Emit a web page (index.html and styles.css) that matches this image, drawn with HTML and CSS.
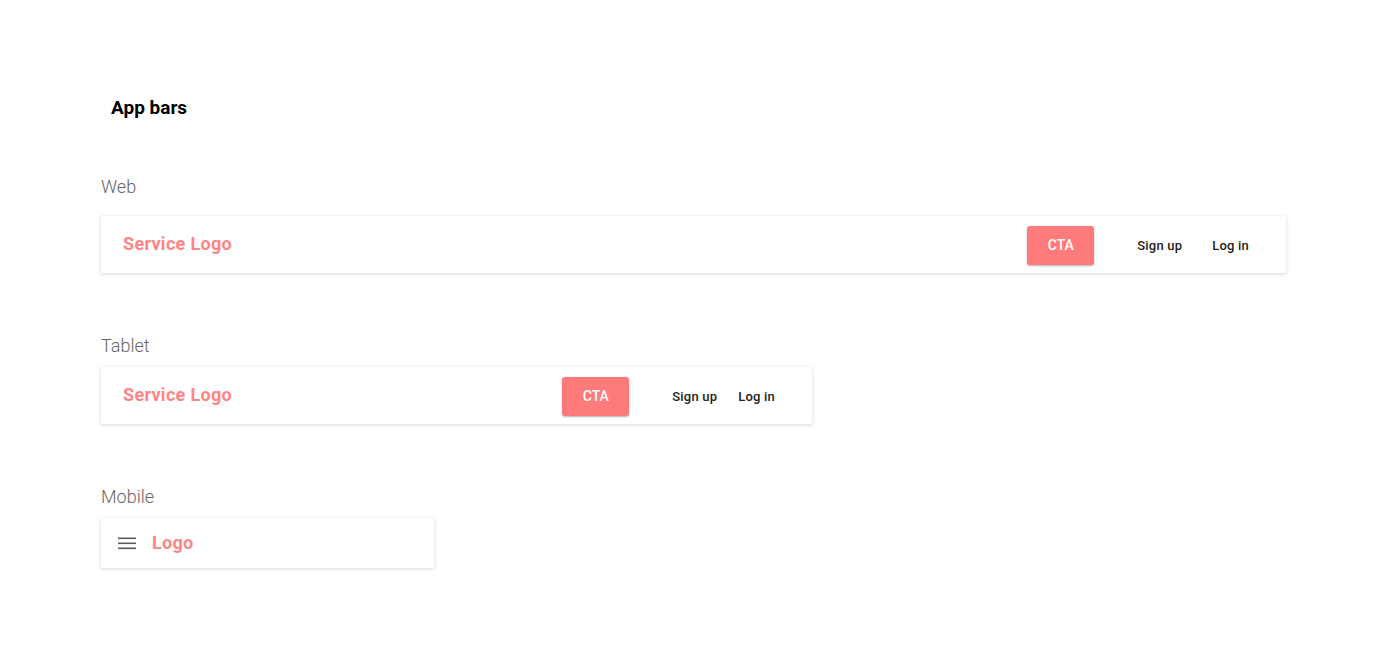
FILE: index.html
```html
<!DOCTYPE html>
<html lang="en">
<head>
<meta charset="utf-8">
<title>App bars</title>
<link rel="stylesheet" href="styles.css">
</head>
<body>
<main class="page">
  <h1 class="title">App bars</h1>

  <div class="label label-web">Web</div>
  <header class="bar bar-web">
    <div class="logo">Service Logo</div>
    <nav class="actions">
      <button class="cta">CTA</button>
      <a class="link">Sign up</a>
      <a class="link link-last">Log in</a>
    </nav>
  </header>

  <div class="label">Tablet</div>
  <header class="bar bar-tablet">
    <div class="logo">Service Logo</div>
    <nav class="actions">
      <button class="cta">CTA</button>
      <a class="link">Sign up</a>
      <a class="link link-last">Log in</a>
    </nav>
  </header>

  <div class="label">Mobile</div>
  <header class="bar bar-mobile">
    <svg class="menu" width="18" height="13" viewBox="0 0 18 13" aria-hidden="true">
      <rect x="0" y="0.5" width="18" height="1.6" fill="#5a5a5a"/>
      <rect x="0" y="5.5" width="18" height="1.6" fill="#5a5a5a"/>
      <rect x="0" y="10.5" width="18" height="1.6" fill="#5a5a5a"/>
    </svg>
    <div class="logo">Logo</div>
  </header>
</main>
</body>
</html>
```

FILE: styles.css
```css
* { box-sizing: border-box; }
html, body { margin: 0; padding: 0; background: #ffffff; }
body { font-family: Roboto, "Noto Sans", "Liberation Sans", sans-serif; color: #222; }

.page {
  padding: 96px 0 80px 101px;
  display: flex;
  flex-direction: column;
  align-items: flex-start;
}

.title {
  margin: 0 0 0 10px;
  font-size: 19px;
  line-height: 24px;
  font-weight: 700;
  color: #000;
}

.label {
  margin-top: 61px;
  margin-bottom: 9px;
  font-size: 18px;
  line-height: 24px;
  font-weight: 300;
  color: #666;
}
.label-web { margin-top: 55px; margin-bottom: 17px; }

.bar {
  display: flex;
  align-items: center;
  height: 57px;
  background: #fff;
  box-shadow: 0 1px 4px rgba(0, 0, 0, 0.16), 0 0 1px rgba(0, 0, 0, 0.04);
  padding: 0 37px 0 22px;
}
.bar-web { width: 1185px; }
.bar-tablet { width: 711px; }
.bar-mobile { width: 333px; height: 50px; padding: 0 0 0 17px; }

.logo {
  font-size: 18px;
  font-weight: 700;
  letter-spacing: 0.3px;
  color: #ff8585;
  line-height: 24px;
  margin-top: -2px;
}
.bar-mobile .logo { margin-left: 16px; margin-top: 0; }

.menu { display: block; }

.actions {
  margin-left: auto;
  display: flex;
  align-items: center;
}

.cta {
  width: 67px;
  height: 39px;
  border: 0;
  border-radius: 3px;
  background: #ff7b7b;
  color: #fff;
  font-family: inherit;
  font-size: 14px;
  font-weight: 500;
  box-shadow: 0 1px 2px rgba(0, 0, 0, 0.3);
  margin-right: 43px;
  margin-top: 1px;
}

.link {
  font-size: 13px;
  font-weight: 500;
  color: #222;
  letter-spacing: 0.2px;
  margin-top: 1px;
}
.bar-web .link { margin-right: 30px; }
.bar-tablet .link { margin-right: 21px; }
.bar .link-last { margin-right: 0; }
```
